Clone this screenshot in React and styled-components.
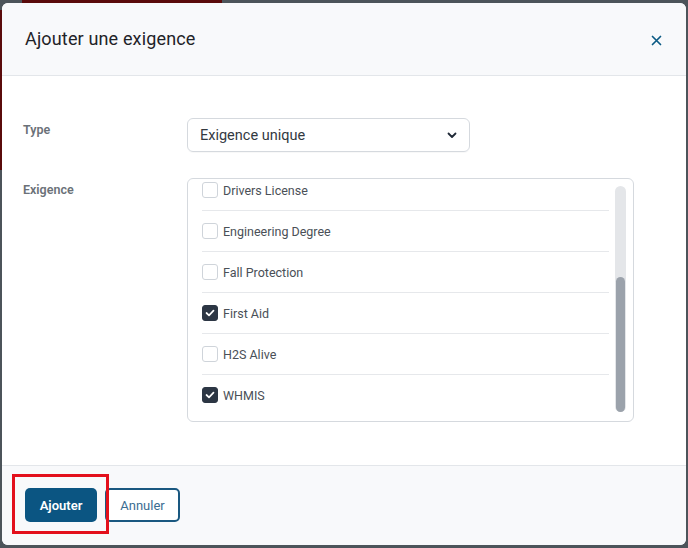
import React, { useLayoutEffect, useRef, useState } from "react";
import styled, { createGlobalStyle } from "styled-components";

const GlobalStyle = createGlobalStyle`
  html, body {
    margin: 0;
    padding: 0;
  }
  body {
    width: 688px;
    height: 548px;
    overflow: hidden;
    font-family: Roboto, "Liberation Sans", Arial, sans-serif;
    background-color: #4c545a;
    background-image:
      linear-gradient(#5a0b0b, #5a0b0b),
      linear-gradient(#5a0b0b, #5a0b0b);
    background-size: 200px 3px, 2px 160px;
    background-position: 22px 0, 0 10px;
    background-repeat: no-repeat;
  }
`;

const requirements = [
  { name: "Aerial Work Platform", checked: false },
  { name: "Confined Space", checked: false },
  { name: "CPR Level C", checked: false },
  { name: "Crane Operator", checked: false },
  { name: "Drivers License", checked: false },
  { name: "Engineering Degree", checked: false },
  { name: "Fall Protection", checked: false },
  { name: "First Aid", checked: true },
  { name: "H2S Alive", checked: false },
  { name: "WHMIS", checked: true },
];

const Modal = () => {
  const listRef = useRef(null);
  const [thumb, setThumb] = useState({ size: 60, offset: 40 });

  useLayoutEffect(() => {
    const el = listRef.current;
    if (!el) return;
    el.scrollTop = el.scrollHeight;
    const visible = el.clientHeight / el.scrollHeight;
    const pos = el.scrollTop / el.scrollHeight;
    setThumb({ size: visible * 100 + 1.5, offset: pos * 100 - 1.5 });
  }, []);

  return (
    <Dialog>
      <Header>
        <Title>Ajouter une exigence</Title>
        <CloseButton aria-label="Fermer">
          <svg width="11" height="11" viewBox="0 0 11 11">
            <path d="M1.5 1.5 L9.5 9.5 M9.5 1.5 L1.5 9.5" stroke="#0b5a84" strokeWidth="1.7" strokeLinecap="round" />
          </svg>
        </CloseButton>
      </Header>

      <Body>
        <FieldRow>
          <Label>Type</Label>
          <Select>
            <span>Exigence unique</span>
            <svg width="10" height="7" viewBox="0 0 10 7">
              <path d="M1.5 1.5 L5 5 L8.5 1.5" stroke="#1f2937" strokeWidth="1.8" fill="none" strokeLinecap="round" strokeLinejoin="round" />
            </svg>
          </Select>
        </FieldRow>

        <FieldRow>
          <Label>Exigence</Label>
          <ListBox>
            <ListScroll ref={listRef}>
              {requirements.map((item) => (
                <Item key={item.name}>
                  <Checkbox $checked={item.checked}>
                    {item.checked && (
                      <svg width="10" height="8" viewBox="0 0 10 8">
                        <path d="M1.5 4 L4 6.3 L8.5 1.7" stroke="#ffffff" strokeWidth="1.7" fill="none" strokeLinecap="round" strokeLinejoin="round" />
                      </svg>
                    )}
                  </Checkbox>
                  <ItemText>{item.name}</ItemText>
                </Item>
              ))}
            </ListScroll>
            <ScrollTrack>
              <ScrollThumb style={{ height: `${thumb.size}%`, top: `${thumb.offset}%` }} />
            </ScrollTrack>
          </ListBox>
        </FieldRow>
      </Body>

      <Footer>
        <Highlight>
          <Button $primary>Ajouter</Button>
        </Highlight>
        <Button>Annuler</Button>
      </Footer>
    </Dialog>
  );
};

export default function App() {
  return (
    <>
      <GlobalStyle />
      <Modal />
    </>
  );
}

const Dialog = styled.div`
  margin: 3px 2px;
  height: 542px;
  background: #ffffff;
  border-radius: 6px;
  overflow: hidden;
  display: flex;
  flex-direction: column;
`;

const Header = styled.div`
  height: 73px;
  flex-shrink: 0;
  box-sizing: border-box;
  background: #f8f9fb;
  border-bottom: 1px solid #e3e6ea;
  display: flex;
  align-items: center;
  justify-content: space-between;
  padding: 0 24px 0 23px;
`;

const Title = styled.h2`
  margin: 0;
  margin-top: -2px;
  font-size: 18px;
  font-weight: 400;
  color: #1f2328;
  letter-spacing: 0.15px;
`;

const CloseButton = styled.button`
  border: none;
  background: none;
  padding: 0;
  margin-top: 3px;
  display: flex;
  cursor: pointer;
`;

const Body = styled.div`
  flex: 1;
  padding: 42px 0 0 21px;
  display: flex;
  flex-direction: column;
  gap: 26px;
`;

const FieldRow = styled.div`
  display: grid;
  grid-template-columns: 164px auto;
  align-items: start;
`;

const Label = styled.div`
  padding-top: 4px;
  font-size: 12.5px;
  line-height: 16px;
  font-weight: 600;
  color: #6b7178;
`;

const Select = styled.div`
  width: 283px;
  height: 34px;
  box-sizing: border-box;
  border: 1px solid #d5d9de;
  border-radius: 6px;
  padding: 0 12px 0 12px;
  display: flex;
  align-items: center;
  justify-content: space-between;
  font-size: 14.5px;
  color: #33393f;
  box-shadow: 0 1px 1px rgba(0, 0, 0, 0.03);
`;

const ListBox = styled.div`
  width: 447px;
  height: 244px;
  box-sizing: border-box;
  border: 1px solid #d5d9de;
  border-radius: 6px;
  padding-right: 7px;
  display: flex;
`;

const ListScroll = styled.div`
  flex: 1;
  overflow: hidden;
  padding: 0 6px 0 14px;
`;

const ScrollTrack = styled.div`
  position: relative;
  width: 11px;
  flex-shrink: 0;
  margin: 7px 0 9px;
  background: #e4e6e9;
  border-radius: 6px;
`;

const ScrollThumb = styled.div`
  position: absolute;
  left: 1px;
  right: 1px;
  background: #9ba2ab;
  border-radius: 5px;
`;

const Item = styled.div`
  height: 40px;
  display: flex;
  align-items: center;
  gap: 5px;
  border-bottom: 1px solid #e6e8eb;

  &:last-child {
    border-bottom: none;
    height: 46px;
    padding-bottom: 6px;
    box-sizing: border-box;
  }
`;

const Checkbox = styled.span`
  width: 16px;
  height: 16px;
  box-sizing: border-box;
  border-radius: 3px;
  border: 1px solid ${(p) => (p.$checked ? "#2c3644" : "#cfd4da")};
  background: ${(p) => (p.$checked ? "#2c3644" : "#ffffff")};
  display: flex;
  align-items: center;
  justify-content: center;
  flex-shrink: 0;
`;

const ItemText = styled.span`
  font-size: 12.5px;
  color: #4a5057;
`;

const Footer = styled.div`
  height: 80px;
  flex-shrink: 0;
  box-sizing: border-box;
  background: #f8f9fb;
  border-top: 1px solid #e3e6ea;
  display: flex;
  align-items: flex-start;
  gap: 8px;
  padding: 22px 0 0 23px;
`;

const Highlight = styled.div`
  position: relative;
  display: flex;

  &::after {
    content: "";
    position: absolute;
    top: -14px;
    left: -13px;
    right: -12px;
    bottom: -12px;
    border: 3px solid #e3101c;
    pointer-events: none;
  }
`;

const Button = styled.button`
  height: 34px;
  box-sizing: border-box;
  border-radius: 5px;
  font-family: Roboto, "Liberation Sans", Arial, sans-serif;
  font-size: 13px;
  cursor: pointer;
  padding: 0;
  width: ${(p) => (p.$primary ? "72px" : "75px")};
  font-weight: ${(p) => (p.$primary ? 600 : 400)};
  background: ${(p) => (p.$primary ? "#0b5582" : "#ffffff")};
  color: ${(p) => (p.$primary ? "#ffffff" : "#3b6d92")};
  border: ${(p) => (p.$primary ? "none" : "2px solid #1a5880")};
`;
